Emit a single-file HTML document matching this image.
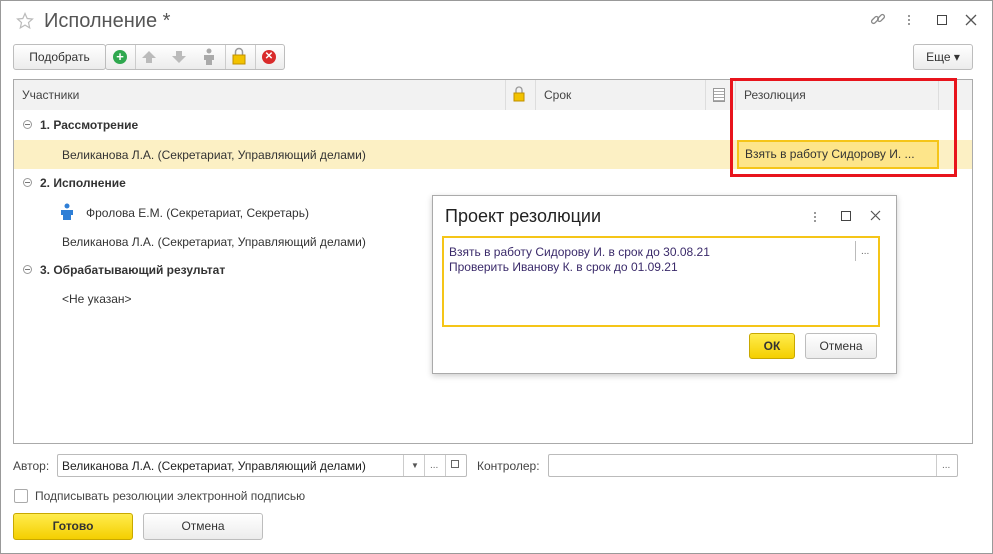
<!DOCTYPE html><html><head><meta charset="utf-8"><style>
*{box-sizing:border-box;margin:0;padding:0}
body{width:993px;height:554px;position:relative;background:#fff;font-family:"Liberation Sans","Noto Sans CJK SC",sans-serif;font-size:12px;color:#333;overflow:hidden}
.a{position:absolute}
.btn{position:absolute;border:1px solid #bdbdbd;border-radius:3px;background:linear-gradient(#fff,#ececec);text-align:center;color:#333;font-size:12px}
.y{background:linear-gradient(#ffec4d,#f4cf00);border-color:#c8a800;font-weight:bold}
.hd{position:absolute;top:80px;height:30px;background:#f2f2f2;border-right:1px solid #ddd;line-height:30px;padding-left:8px;color:#444}
.grp{position:absolute;left:23px;font-weight:bold;color:#333}
.mn{display:inline-block;width:9px;height:9px;border:1px solid #999;border-radius:50%;position:relative;top:0px;margin-right:8px}
.mn:after{content:"";position:absolute;left:1px;top:3px;width:5px;height:1px;background:#777}
.f{position:absolute;border:1px solid #bbb;background:#fff;border-radius:2px}
</style></head><body>
<div class="a" style="left:0;top:0;width:993px;height:554px;border:1px solid #999"></div>
<svg class="a" style="left:16px;top:12px" width="18" height="18" viewBox="0 0 18 18"><path d="M9 1.5l2.2 5 5.3.5-4 3.6 1.2 5.3L9 13.1 4.3 15.9l1.2-5.3-4-3.6 5.3-.5z" fill="none" stroke="#bbb" stroke-width="1.2"/></svg>
<div class="a" style="left:44px;top:10px;font-size:20px;color:#555">Исполнение *</div>
<svg class="a" style="left:870px;top:11px" width="16" height="16" viewBox="0 0 16 16" fill="none" stroke="#888" stroke-width="1.3"><rect x="1" y="7" width="8" height="4" rx="2" transform="rotate(-45 5 9)"/><rect x="7" y="5" width="8" height="4" rx="2" transform="rotate(-45 11 7)"/></svg>
<div class="a" style="left:908px;top:14px;width:2px;height:11px;background:radial-gradient(circle,#777 1px,transparent 1px) 0 0/2px 4px"></div>
<div class="a" style="left:937px;top:15px;width:10px;height:10px;border:1.5px solid #444"></div>
<svg class="a" style="left:965px;top:14px" width="12" height="12"><path d="M1 1L11 11M11 1L1 11" stroke="#555" stroke-width="1.3"/></svg>
<div class="btn" style="left:13px;top:44px;width:93px;height:26px;line-height:24px">Подобрать</div>
<div class="btn" style="left:105px;top:44px;width:180px;height:26px"></div>
<div class="a" style="left:135px;top:45px;width:1px;height:24px;background:#ccc"></div>
<div class="a" style="left:225px;top:45px;width:1px;height:24px;background:#ccc"></div>
<div class="a" style="left:255px;top:45px;width:1px;height:24px;background:#ccc"></div>
<div class="a" style="left:113px;top:50px;width:14px;height:14px;border-radius:50%;background:#2fa84f;color:#fff;font-weight:bold;text-align:center;line-height:14px;font-size:13px">+</div>
<svg class="a" style="left:141px;top:50px" width="16" height="14"><path d="M8 1 L15 8 H11 V13 H5 V8 H1Z" fill="#bbb"/></svg>
<svg class="a" style="left:171px;top:50px" width="16" height="14"><path d="M8 13 L15 6 H11 V1 H5 V6 H1Z" fill="#bbb"/></svg>
<svg class="a" style="left:202px;top:48px" width="14" height="18"><circle cx="7" cy="3" r="2.5" fill="#aaa"/><path d="M2 7h10v5h-2v5H4v-5H2z" fill="#aaa"/></svg>
<svg class="a" style="left:232px;top:47px" width="14" height="18"><path d="M3.5 8V5a3.5 3.5 0 0 1 7 0v3" stroke="#999" stroke-width="1.5" fill="none"/><rect x="1" y="8" width="12" height="9" fill="#f2c200" stroke="#c09000"/></svg>
<div class="a" style="left:262px;top:50px;width:14px;height:14px;border-radius:50%;background:#d92b2b;color:#fff;font-weight:bold;text-align:center;line-height:14px;font-size:10px">✕</div>
<div class="btn" style="left:913px;top:44px;width:60px;height:26px;line-height:24px">Еще ▾</div>
<div class="a" style="left:13px;top:79px;width:960px;height:365px;border:1px solid #aaa"></div>
<div class="hd" style="left:14px;width:492px">Участники</div>
<div class="hd" style="left:506px;width:30px"></div>
<svg class="a" style="left:513px;top:86px" width="12" height="16"><path d="M3 7V4a3 3 0 0 1 6 0v3" stroke="#999" stroke-width="1.3" fill="none"/><rect x="1" y="7" width="10" height="8" fill="#f2c200" stroke="#c09000"/></svg>
<div class="hd" style="left:536px;width:170px">Срок</div>
<div class="hd" style="left:706px;width:30px"></div>
<div class="a" style="left:713px;top:88px;width:12px;height:14px;border:1px solid #999;background:repeating-linear-gradient(#fff 0 2px,#aaa 2px 3px)"></div>
<div class="hd" style="left:736px;width:203px">Резолюция</div>
<div class="hd" style="left:939px;width:33px;border:none"></div>
<div class="grp" style="top:118px"><span class="mn"></span>1. Рассмотрение</div>
<div class="a" style="left:14px;top:140px;width:958px;height:29px;background:#fcf0c4"></div>
<div class="a" style="left:62px;top:148px">Великанова Л.А. (Секретариат, Управляющий делами)</div>
<div class="a" style="left:737px;top:140px;width:202px;height:29px;background:#fde58a;border:2px solid #f5c518;line-height:25px;padding-left:6px">Взять в работу Сидорову И. ...</div>
<div class="grp" style="top:176px"><span class="mn"></span>2. Исполнение</div>
<svg class="a" style="left:60px;top:203px" width="14" height="18"><circle cx="7" cy="3" r="2.5" fill="#2f7fd6"/><path d="M1 7h12v5h-2v5H3v-5H1z" fill="#2f7fd6"/></svg>
<div class="a" style="left:86px;top:206px">Фролова Е.М. (Секретариат, Секретарь)</div>
<div class="a" style="left:62px;top:235px">Великанова Л.А. (Секретариат, Управляющий делами)</div>
<div class="grp" style="top:263px"><span class="mn"></span>3. Обрабатывающий результат</div>
<div class="a" style="left:62px;top:292px">&lt;Не указан&gt;</div>
<div class="a" style="left:730px;top:78px;width:227px;height:99px;border:3px solid #e8141c"></div>
<div class="a" style="left:432px;top:195px;width:465px;height:179px;border:1px solid #aaa;background:#fff;box-shadow:0 2px 6px rgba(0,0,0,.2)"></div>
<div class="a" style="left:445px;top:206px;font-size:18px;color:#222">Проект резолюции</div>
<div class="a" style="left:814px;top:211px;width:2px;height:11px;background:radial-gradient(circle,#777 1px,transparent 1px) 0 0/2px 4px"></div>
<div class="a" style="left:841px;top:211px;width:10px;height:10px;border:1.5px solid #444"></div>
<svg class="a" style="left:870px;top:210px" width="11" height="11"><path d="M1 1L10 10M10 1L1 10" stroke="#555" stroke-width="1.2"/></svg>
<div class="a" style="left:442px;top:236px;width:438px;height:91px;border:2px solid #f5c518"></div>
<div class="a" style="left:449px;top:245px;line-height:15px;color:#3a2a6a">Взять в работу Сидорову И. в срок до 30.08.21<br>Проверить Иванову К. в срок до 01.09.21</div>
<div class="a" style="left:855px;top:241px;width:1px;height:20px;background:#bbb"></div>
<div class="a" style="left:861px;top:246px;font-size:10px;color:#666">...</div>
<div class="btn y" style="left:749px;top:333px;width:46px;height:26px;line-height:24px">ОК</div>
<div class="btn" style="left:805px;top:333px;width:72px;height:26px;line-height:24px">Отмена</div>
<div class="a" style="left:13px;top:459px;color:#444">Автор:</div>
<div class="f" style="left:57px;top:454px;width:410px;height:23px"></div>
<div class="a" style="left:62px;top:459px;color:#222">Великанова Л.А. (Секретариат, Управляющий делами)</div>
<div class="a" style="left:403px;top:455px;width:1px;height:21px;background:#ccc"></div>
<div class="a" style="left:424px;top:455px;width:1px;height:21px;background:#ccc"></div>
<div class="a" style="left:445px;top:455px;width:1px;height:21px;background:#ccc"></div>
<div class="a" style="left:411px;top:461px;font-size:8px;color:#555">▼</div>
<div class="a" style="left:430px;top:460px;font-size:10px;color:#666">...</div>
<div class="a" style="left:451px;top:460px;width:8px;height:8px;border:1px solid #666"></div>
<div class="a" style="left:477px;top:459px;color:#444">Контролер:</div>
<div class="f" style="left:548px;top:454px;width:410px;height:23px"></div>
<div class="a" style="left:936px;top:455px;width:1px;height:21px;background:#ccc"></div>
<div class="a" style="left:942px;top:460px;font-size:10px;color:#666">...</div>
<div class="a" style="left:14px;top:489px;width:14px;height:14px;border:1px solid #aaa;border-radius:2px;background:#fff"></div>
<div class="a" style="left:35px;top:489px;color:#444">Подписывать резолюции электронной подписью</div>
<div class="btn y" style="left:13px;top:513px;width:120px;height:27px;line-height:25px">Готово</div>
<div class="btn" style="left:143px;top:513px;width:120px;height:27px;line-height:25px">Отмена</div>
</body></html>
